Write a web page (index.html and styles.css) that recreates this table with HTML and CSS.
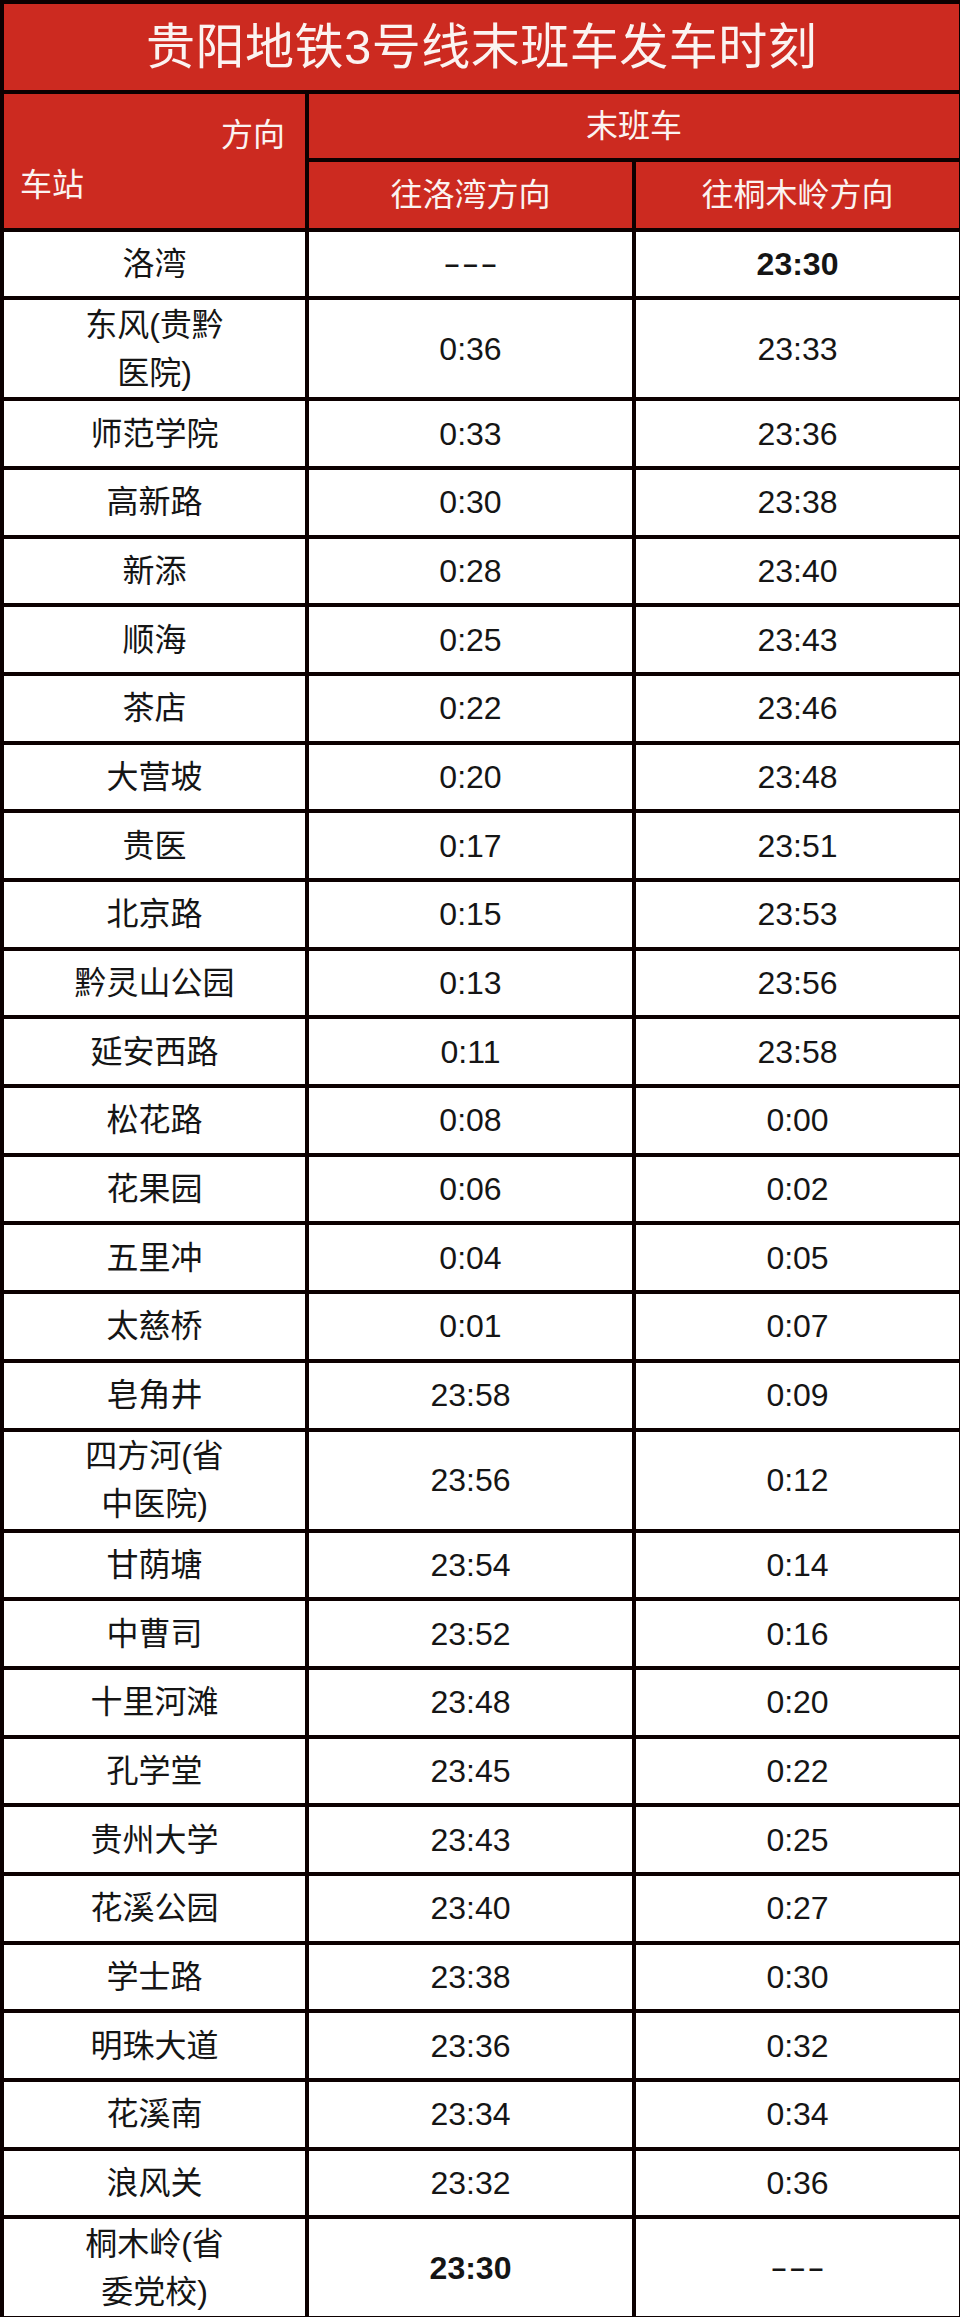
FILE: index.html
```html
<!DOCTYPE html>
<html lang="zh-CN">
<head>
<meta charset="utf-8">
<title>贵阳地铁3号线末班车发车时刻</title>
<link rel="stylesheet" href="styles.css">
</head>
<body>
<table class="sheet">
  <colgroup>
    <col class="c-station">
    <col class="c-dir">
    <col class="c-dir">
  </colgroup>
  <thead>
    <tr class="r-title"><th colspan="3" class="title">贵阳地铁3号线末班车发车时刻</th></tr>
    <tr class="r-head1">
      <th rowspan="2" class="corner">
        <div class="corner-in">
          <span class="dir-label">方向</span>
          <span class="st-label">车站</span>
        </div>
      </th>
      <th colspan="2" class="hd">末班车</th>
    </tr>
    <tr class="r-head2">
      <th class="hd">往洛湾方向</th>
      <th class="hd">往桐木岭方向</th>
    </tr>
  </thead>
  <tbody>
    <tr><td>洛湾</td><td class="dash">–––</td><td class="b">23:30</td></tr>
    <tr class="dbl"><td>东风(贵黔<br>医院)</td><td>0:36</td><td>23:33</td></tr>
    <tr><td>师范学院</td><td>0:33</td><td>23:36</td></tr>
    <tr><td>高新路</td><td>0:30</td><td>23:38</td></tr>
    <tr><td>新添</td><td>0:28</td><td>23:40</td></tr>
    <tr><td>顺海</td><td>0:25</td><td>23:43</td></tr>
    <tr><td>茶店</td><td>0:22</td><td>23:46</td></tr>
    <tr><td>大营坡</td><td>0:20</td><td>23:48</td></tr>
    <tr><td>贵医</td><td>0:17</td><td>23:51</td></tr>
    <tr><td>北京路</td><td>0:15</td><td>23:53</td></tr>
    <tr><td>黔灵山公园</td><td>0:13</td><td>23:56</td></tr>
    <tr><td>延安西路</td><td>0:11</td><td>23:58</td></tr>
    <tr><td>松花路</td><td>0:08</td><td>0:00</td></tr>
    <tr><td>花果园</td><td>0:06</td><td>0:02</td></tr>
    <tr><td>五里冲</td><td>0:04</td><td>0:05</td></tr>
    <tr><td>太慈桥</td><td>0:01</td><td>0:07</td></tr>
    <tr><td>皂角井</td><td>23:58</td><td>0:09</td></tr>
    <tr class="dbl"><td>四方河(省<br>中医院)</td><td>23:56</td><td>0:12</td></tr>
    <tr><td>甘荫塘</td><td>23:54</td><td>0:14</td></tr>
    <tr><td>中曹司</td><td>23:52</td><td>0:16</td></tr>
    <tr><td>十里河滩</td><td>23:48</td><td>0:20</td></tr>
    <tr><td>孔学堂</td><td>23:45</td><td>0:22</td></tr>
    <tr><td>贵州大学</td><td>23:43</td><td>0:25</td></tr>
    <tr><td>花溪公园</td><td>23:40</td><td>0:27</td></tr>
    <tr><td>学士路</td><td>23:38</td><td>0:30</td></tr>
    <tr><td>明珠大道</td><td>23:36</td><td>0:32</td></tr>
    <tr><td>花溪南</td><td>23:34</td><td>0:34</td></tr>
    <tr><td>浪风关</td><td>23:32</td><td>0:36</td></tr>
    <tr class="dbl"><td>桐木岭(省<br>委党校)</td><td class="b">23:30</td><td class="dash">–––</td></tr>
  </tbody>
</table>
</body>
</html>
```

FILE: styles.css
```css
html, body {
  margin: 0;
  padding: 0;
  background: #ffffff;
}

.sheet {
  width: 960px;
  border-collapse: collapse;
  table-layout: fixed;
  font-family: "Liberation Sans", "Noto Sans CJK SC", sans-serif;
  color: #151515;
}

.c-station { width: 305px; }
.c-dir { width: 327px; }

.sheet th,
.sheet td {
  border: 4px solid #0c0000;
  padding: 0;
  text-align: center;
  vertical-align: middle;
  font-size: 32px;
  font-weight: 400;
  line-height: 40px;
}

.sheet th {
  background: #cc2a20;
  color: #fbf3f1;
}

.r-title { height: 90px; }
.title {
  font-size: 49px !important;
  letter-spacing: 0.5px;
}

.r-head1 { height: 68px; }
.r-head2 { height: 69.5px; }

.corner { vertical-align: top !important; }
.corner-in {
  display: flex;
  flex-direction: column;
  padding-top: 21px;
}
.dir-label {
  align-self: flex-end;
  padding-right: 20px;
}
.st-label {
  align-self: flex-start;
  padding-left: 16px;
  margin-top: 10px;
}

.sheet tbody tr { height: 68.7px; }
.sheet tbody tr.dbl { height: 101px; }
.sheet tbody tr.dbl td:first-child { line-height: 48px; }

.b { font-weight: 700 !important; }
.dash {
  font-size: 26px !important;
  font-weight: 700 !important;
  letter-spacing: 4px;
  text-indent: 4px;
}
```
